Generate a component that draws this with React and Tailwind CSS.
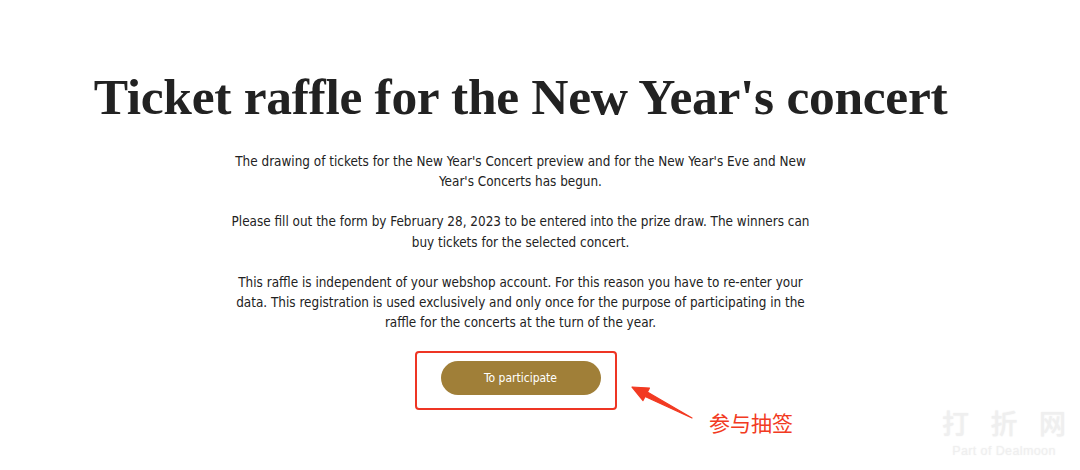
import React from 'react';

export default function App() {
  const paragraphs = [
    "The drawing of tickets for the New Year's Concert preview and for the New Year's Eve and New Year's Concerts has begun.",
    'Please fill out the form by February 28, 2023 to be entered into the prize draw. The winners can buy tickets for the selected concert.',
    'This raffle is independent of your webshop account. For this reason you have to re-enter your data. This registration is used exclusively and only once for the purpose of participating in the raffle for the concerts at the turn of the year.',
  ];

  return (
    <div className="relative w-[1080px] h-[470px] bg-white overflow-hidden">
      <div className="w-[1041px] flex flex-col items-center pt-[68px]">
        <h1 className="text-[51.5px] leading-[58px] font-bold text-[#222] tracking-[-0.3px] font-['Liberation_Serif',serif]">
          Ticket raffle for the New Year's concert
        </h1>

        <div className="mt-[26px] w-[582px] flex flex-col gap-[19.5px] text-center text-[13.4px] leading-[20.4px] text-[#222] font-['DejaVu_Sans_Condensed','DejaVu_Sans',sans-serif]">
          {paragraphs.map((p, i) => (
            <p key={i}>{p}</p>
          ))}
        </div>

        {/* annotated button */}
        <div className="mt-[17px] mr-[10px] w-[202px] h-[59px] border-2 border-[#ee3524] rounded-[4px] pl-[24px] pt-[8px]">
          <button className="w-[160px] h-[34px] rounded-full bg-[#a07f38] text-white text-[12px] font-['DejaVu_Sans_Condensed','DejaVu_Sans',sans-serif]">
            To participate
          </button>
        </div>
      </div>

      {/* annotation arrow */}
      <svg className="absolute left-[620px] top-[375px]" width="80" height="50" viewBox="0 0 80 50">
        <polygon
          points="12,12 23,25.5 25.1,21.5 72,43 27.3,17.1 29.4,13.1"
          fill="#f23a22"
          stroke="#f23a22"
          strokeWidth="1.2"
          strokeLinejoin="round"
        />
      </svg>
      <div className="absolute left-[709px] top-[407px] text-[21px] leading-[30px] text-[#f23a22] font-['Noto_Sans_CJK_SC',sans-serif]">
        参与抽签
      </div>

      {/* watermark */}
      <div className="absolute left-[942px] top-[407px] w-[124px] flex flex-col items-center text-[#efefef] [text-shadow:0_0_2px_rgba(0,0,0,0.06)]">
        <div className="w-full flex justify-between text-[27px] leading-[32px] font-medium font-['Noto_Sans_CJK_SC',sans-serif]">
          <span>打</span>
          <span>折</span>
          <span>网</span>
        </div>
        <div className="mt-[5px] text-[12.5px] leading-[14px] tracking-[0.4px] font-['Liberation_Sans',sans-serif]">Part of Dealmoon</div>
      </div>
    </div>
  );
}
